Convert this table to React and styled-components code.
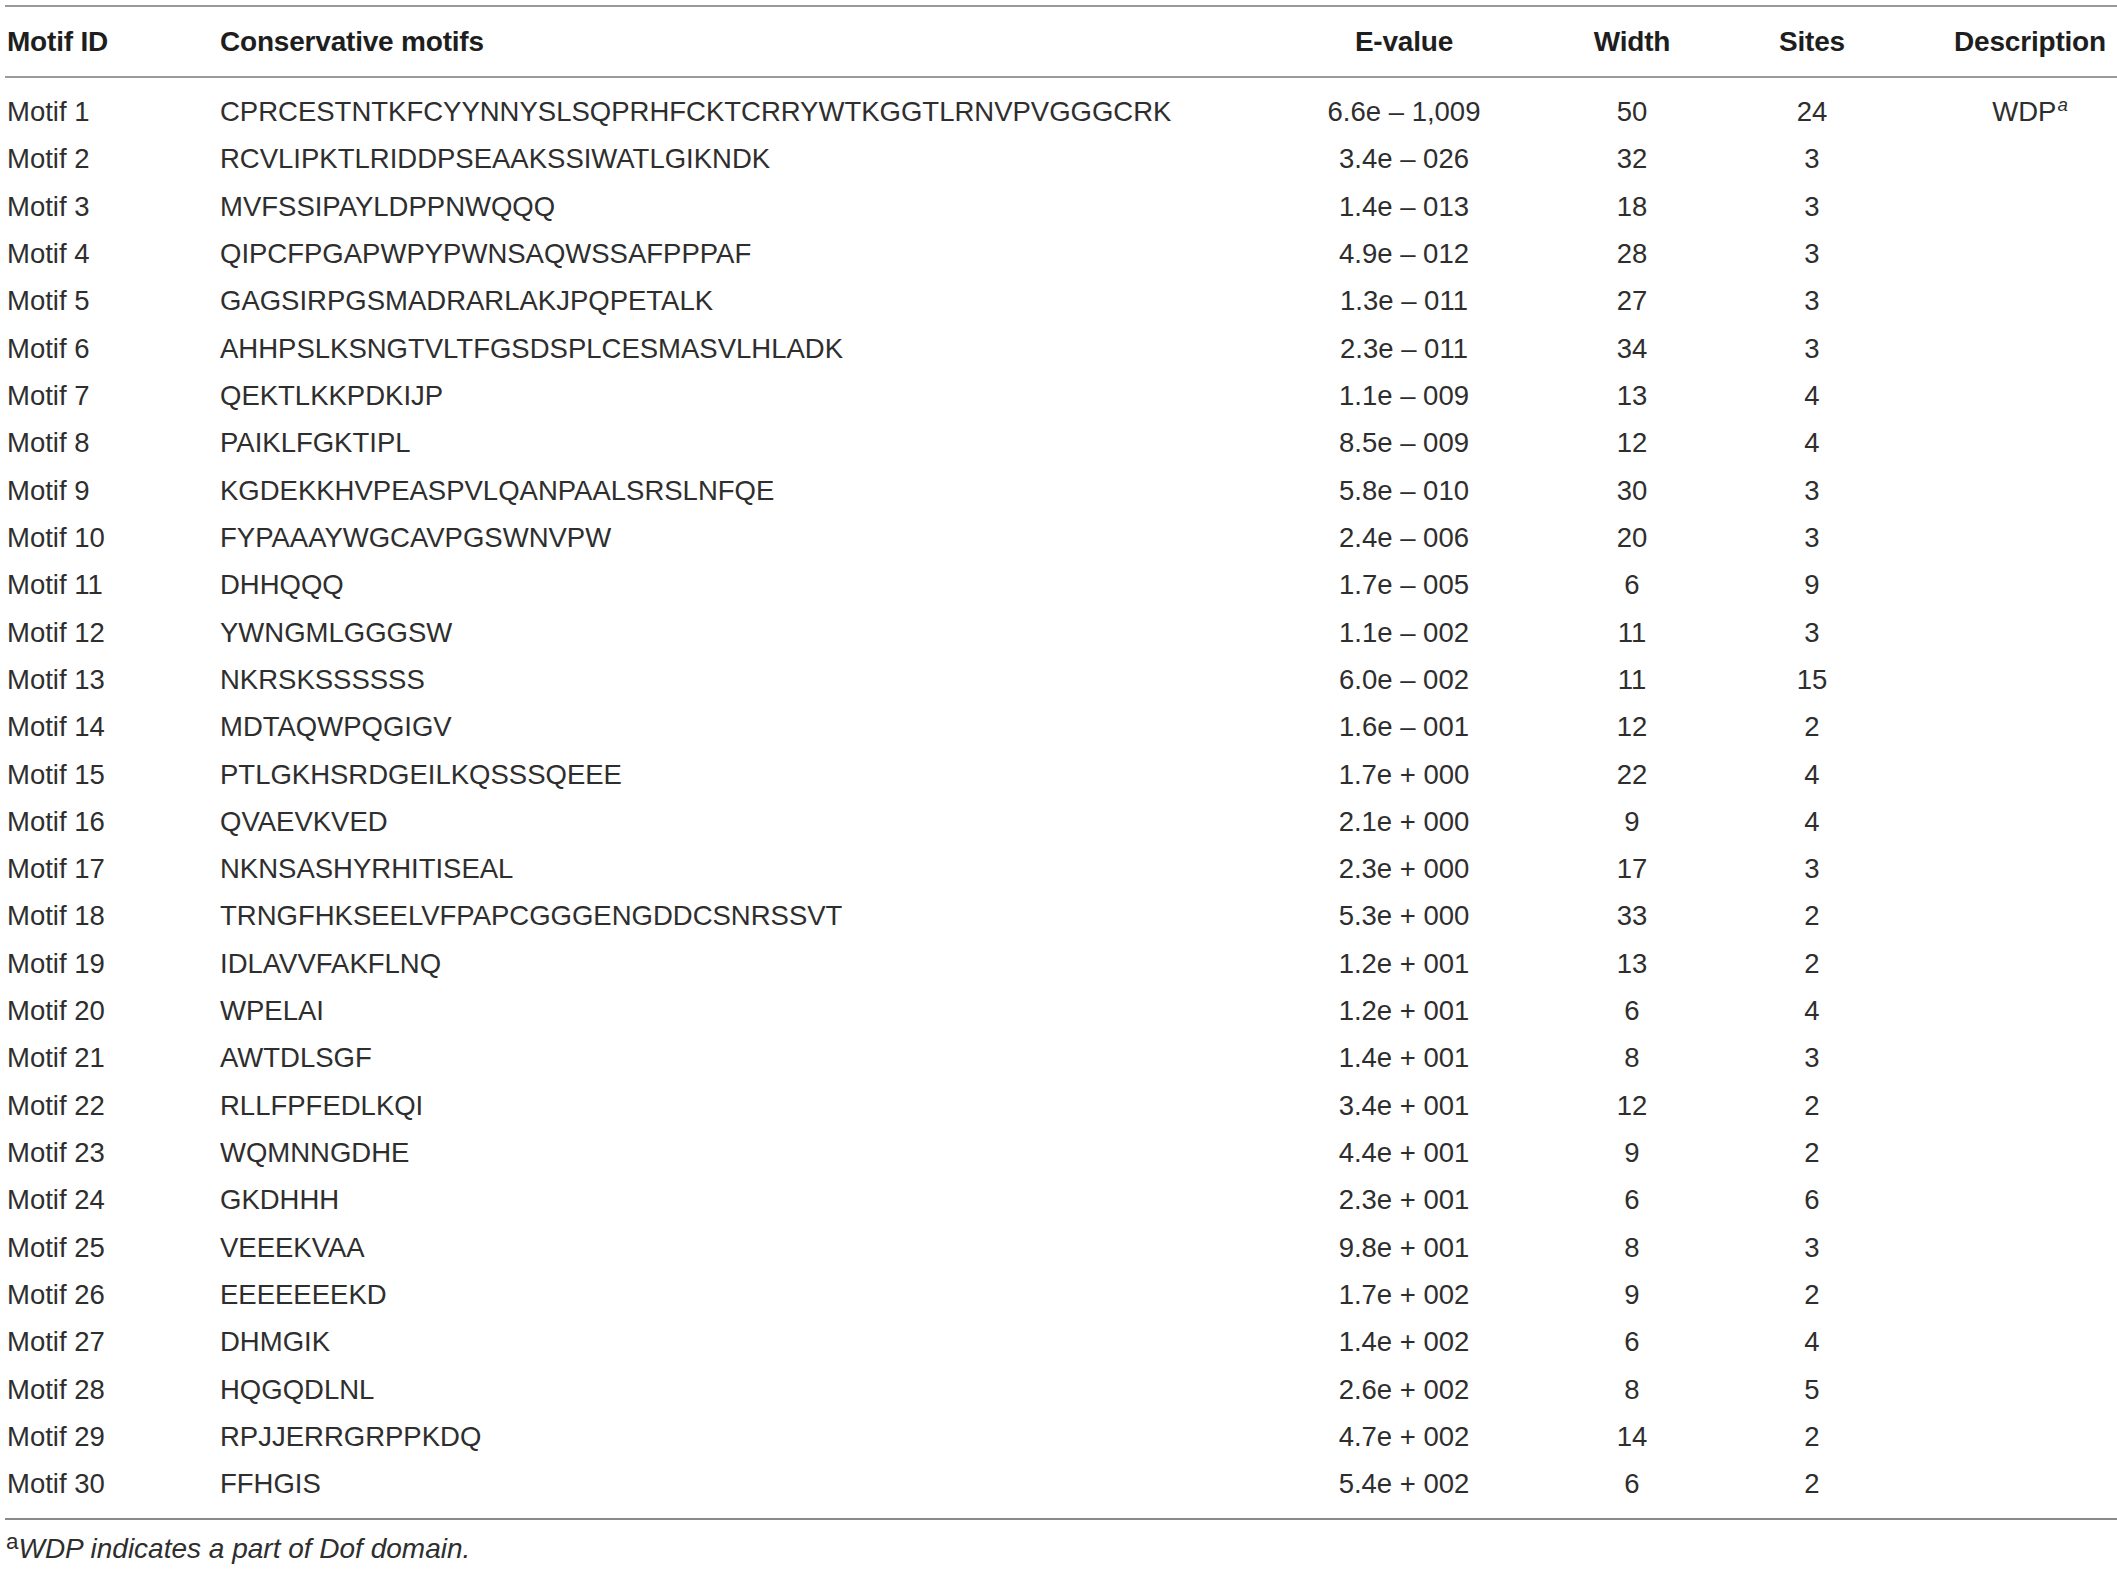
import React from "react";
import styled, { createGlobalStyle } from "styled-components";

const Global = createGlobalStyle`
  html, body { margin: 0; padding: 0; background: #fff; overflow: hidden; }
  body { font-family: "Liberation Sans", Arial, Helvetica, sans-serif; color: #2e2e2e; }
`;

const Page = styled.div`
  width: 2117px;
  height: 1570px;
  padding: 5px 0 0 5px;
  box-sizing: border-box;
`;

const Table = styled.div`
  width: 2112px;
  border-top: 2px solid #9a9a9a;
`;

const COLS = "213px 1080px 208px 248px 187px 174px";

const HeadRow = styled.div`
  display: grid;
  grid-template-columns: ${COLS};
  padding-left: 2px;
  height: 69px;
  align-items: center;
  border-bottom: 2px solid #9a9a9a;
  color: #1e1e1e;
`;

const Body = styled.div`
  padding: 10px 0 10px 2px;
  border-bottom: 2px solid #8a8a8a;
`;

const Row = styled.div`
  display: grid;
  grid-template-columns: ${COLS};
  height: 47.33px;
  align-items: center;
`;

const Cell = styled.div`
  font-size: ${(p) => (p.$head ? "28px" : "27.5px")};
  font-weight: ${(p) => (p.$head ? 700 : 400)};
  letter-spacing: ${(p) => (p.$head ? "-0.2px" : "0")};
  text-align: ${(p) => (p.$center ? "center" : "left")};
  padding-right: ${(p) => p.$pr || 0}px;
  white-space: nowrap;
  overflow: visible;
  line-height: 1;
`;

const Sup = styled.sup`
  font-size: ${(p) => (p.$italic ? "0.68em" : "0.8em")};
  font-style: ${(p) => (p.$italic ? "italic" : "normal")};
  vertical-align: 0;
  position: relative;
  top: ${(p) => (p.$italic ? "-0.55em" : "-0.4em")};
  margin-left: 1px;
`;

const Footnote = styled.div`
  margin-top: 14px;
  font-size: 28px;
  line-height: 30px;
  white-space: nowrap;
  em { font-style: italic; }
`;

const data = [
  ["Motif 1", "CPRCESTNTKFCYYNNYSLSQPRHFCKTCRRYWTKGGTLRNVPVGGGCRK", "6.6e \u2013 1,009", "50", "24", true],
  ["Motif 2", "RCVLIPKTLRIDDPSEAAKSSIWATLGIKNDK", "3.4e \u2013 026", "32", "3"],
  ["Motif 3", "MVFSSIPAYLDPPNWQQQ", "1.4e \u2013 013", "18", "3"],
  ["Motif 4", "QIPCFPGAPWPYPWNSAQWSSAFPPPAF", "4.9e \u2013 012", "28", "3"],
  ["Motif 5", "GAGSIRPGSMADRARLAKJPQPETALK", "1.3e \u2013 011", "27", "3"],
  ["Motif 6", "AHHPSLKSNGTVLTFGSDSPLCESMASVLHLADK", "2.3e \u2013 011", "34", "3"],
  ["Motif 7", "QEKTLKKPDKIJP", "1.1e \u2013 009", "13", "4"],
  ["Motif 8", "PAIKLFGKTIPL", "8.5e \u2013 009", "12", "4"],
  ["Motif 9", "KGDEKKHVPEASPVLQANPAALSRSLNFQE", "5.8e \u2013 010", "30", "3"],
  ["Motif 10", "FYPAAAYWGCAVPGSWNVPW", "2.4e \u2013 006", "20", "3"],
  ["Motif 11", "DHHQQQ", "1.7e \u2013 005", "6", "9"],
  ["Motif 12", "YWNGMLGGGSW", "1.1e \u2013 002", "11", "3"],
  ["Motif 13", "NKRSKSSSSSS", "6.0e \u2013 002", "11", "15"],
  ["Motif 14", "MDTAQWPQGIGV", "1.6e \u2013 001", "12", "2"],
  ["Motif 15", "PTLGKHSRDGEILKQSSSQEEE", "1.7e + 000", "22", "4"],
  ["Motif 16", "QVAEVKVED", "2.1e + 000", "9", "4"],
  ["Motif 17", "NKNSASHYRHITISEAL", "2.3e + 000", "17", "3"],
  ["Motif 18", "TRNGFHKSEELVFPAPCGGGENGDDCSNRSSVT", "5.3e + 000", "33", "2"],
  ["Motif 19", "IDLAVVFAKFLNQ", "1.2e + 001", "13", "2"],
  ["Motif 20", "WPELAI", "1.2e + 001", "6", "4"],
  ["Motif 21", "AWTDLSGF", "1.4e + 001", "8", "3"],
  ["Motif 22", "RLLFPFEDLKQI", "3.4e + 001", "12", "2"],
  ["Motif 23", "WQMNNGDHE", "4.4e + 001", "9", "2"],
  ["Motif 24", "GKDHHH", "2.3e + 001", "6", "6"],
  ["Motif 25", "VEEEKVAA", "9.8e + 001", "8", "3"],
  ["Motif 26", "EEEEEEEKD", "1.7e + 002", "9", "2"],
  ["Motif 27", "DHMGIK", "1.4e + 002", "6", "4"],
  ["Motif 28", "HQGQDLNL", "2.6e + 002", "8", "5"],
  ["Motif 29", "RPJJERRGRPPKDQ", "4.7e + 002", "14", "2"],
  ["Motif 30", "FFHGIS", "5.4e + 002", "6", "2"],
];

export default function App() {
  return (
    <>
      <Global />
      <Page>
        <Table>
          <HeadRow>
            <Cell $head>Motif ID</Cell>
            <Cell $head>Conservative motifs</Cell>
            <Cell $head $center>E-value</Cell>
            <Cell $head $center>Width</Cell>
            <Cell $head $center $pr={75}>Sites</Cell>
            <Cell $head $center>Description</Cell>
          </HeadRow>
          <Body>
            {data.map(([id, motif, ev, w, s, desc]) => (
              <Row key={id}>
                <Cell>{id}</Cell>
                <Cell>{motif}</Cell>
                <Cell $center>{ev}</Cell>
                <Cell $center>{w}</Cell>
                <Cell $center $pr={75}>{s}</Cell>
                <Cell $center>
                  {desc ? (
                    <>
                      WDP<Sup $italic>a</Sup>
                    </>
                  ) : null}
                </Cell>
              </Row>
            ))}
          </Body>
        </Table>
        <Footnote>
          <Sup>a</Sup>
          <em>WDP indicates a part of Dof domain.</em>
        </Footnote>
      </Page>
    </>
  );
}
